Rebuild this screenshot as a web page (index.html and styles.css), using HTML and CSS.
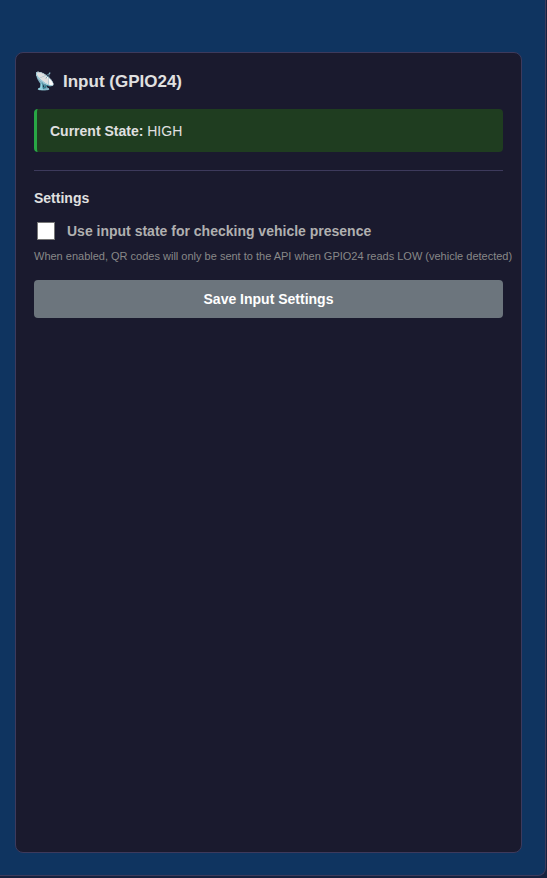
FILE: index.html
```
<!DOCTYPE html>
<html lang="en">
<head>
    <meta charset="UTF-8">
    <meta name="viewport" content="width=device-width, initial-scale=1.0">
    <title>GPIO Settings</title>
    <link rel="stylesheet" href="styles.css">
</head>
<body>
    <main class="panel">
        <section class="card">
            <h3 class="card-title"><span class="icon">📡</span>Input (GPIO24)</h3>
            <div class="state high">
                <strong>Current State:</strong> <span id="inputState">HIGH</span>
            </div>
            <form class="settings">
                <h4>Settings</h4>
                <div class="check-row">
                    <input type="checkbox" id="useInputState">
                    <label for="useInputState">Use input state for checking vehicle presence</label>
                </div>
                <small class="hint">When enabled, QR codes will only be sent to the API when GPIO24 reads LOW (vehicle detected)</small>
                <button type="button" class="btn">Save Input Settings</button>
            </form>
        </section>
    </main>
</body>
</html>
```

FILE: styles.css
```
* {
    box-sizing: border-box;
    margin: 0;
    padding: 0;
}
body {
    font-family: "Liberation Sans", Arial, sans-serif;
    font-size: 14px;
    color: #e0e0e0;
    background-color: #16213e;
    display: flex;
    min-height: 100vh;
    padding: 0 1px 2px 0;
}
.panel {
    flex: 1;
    min-width: 0;
    display: flex;
    padding: 52px 23px 22px 15px;
    background-color: #0f3460;
    border: solid #3d3a5c;
    border-width: 0 1px 1px 0;
    border-bottom-right-radius: 8px;
}
.card {
    flex: 1;
    min-width: 0;
    padding: 18px;
    background-color: #1a1a2e;
    border: 1px solid #3d3a5c;
    border-radius: 8px;
}
.card-title {
    display: flex;
    align-items: center;
    gap: 8px;
    font-size: 17px;
    line-height: 22px;
    margin-bottom: 16px;
}
.state {
    padding: 14px 13px 12px;
    line-height: 17px;
    border-left: 3px solid #28a745;
    border-radius: 4px;
}
.state.high {
    background-color: #1f3d20;
}
.settings {
    display: flex;
    flex-direction: column;
    margin-top: 18px;
    padding-top: 18px;
    border-top: 1px solid #3d3a5c;
}
.settings h4 {
    font-size: 14px;
    line-height: 18px;
    margin-bottom: 14px;
}
.check-row {
    display: flex;
    align-items: center;
    gap: 12px;
    padding-left: 3px;
    font-weight: bold;
    line-height: 20px;
    color: #b0b0b0;
}
.check-row input {
    appearance: none;
    width: 18px;
    height: 18px;
    background-color: #fff;
    border: 1px solid #767676;
}
.check-row input:checked {
    background-color: #28a745;
}
.hint {
    font-size: 11px;
    line-height: 13px;
    margin: 9px 0 17px;
    color: #888;
    white-space: nowrap;
}
.btn {
    padding: 10px;
    font-family: inherit;
    font-size: 14px;
    font-weight: bold;
    line-height: 18px;
    color: #fff;
    background-color: #6c757d;
    border: none;
    border-radius: 4px;
    cursor: pointer;
}
.btn:hover {
    background-color: #5a6268;
}
```
